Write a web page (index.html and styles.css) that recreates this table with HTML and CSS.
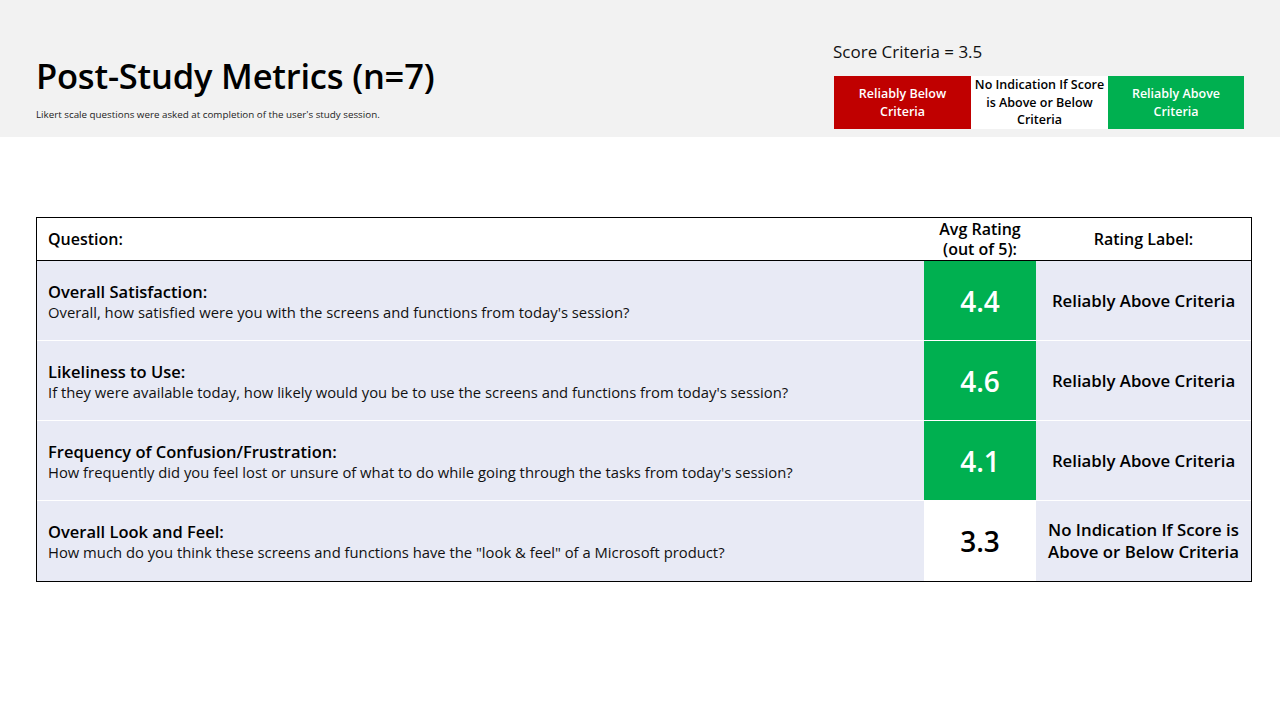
FILE: index.html
```html
<!DOCTYPE html>
<html>
<head>
<meta charset="utf-8">
<link rel="stylesheet" href="styles.css">
</head>
<body>
<header class="top">
  <div class="titles">
    <h1 class="title">Post-Study Metrics (n=7)</h1>
    <p class="subtitle">Likert scale questions were asked at completion of the user's study session.</p>
  </div>
  <div class="criteria">
    <div class="criteria-label">Score Criteria = 3.5</div>
    <div class="legend">
      <div class="legend-box red">Reliably Below Criteria</div>
      <div class="legend-box white">No Indication If Score is Above or Below Criteria</div>
      <div class="legend-box green">Reliably Above Criteria</div>
    </div>
  </div>
</header>
<main class="content">
  <div class="table">
    <div class="head q">Question:</div>
    <div class="head c">Avg Rating<br>(out of 5):</div>
    <div class="head c">Rating Label:</div>

    <div class="cell q"><b>Overall Satisfaction:</b><span>Overall, how satisfied were you with the screens and functions from today's session?</span></div>
    <div class="cell score good">4.4</div>
    <div class="cell label">Reliably Above Criteria</div>

    <div class="cell q"><b>Likeliness to Use:</b><span>If they were available today, how likely would you be to use the screens and functions from today's session?</span></div>
    <div class="cell score good">4.6</div>
    <div class="cell label">Reliably Above Criteria</div>

    <div class="cell q"><b>Frequency of Confusion/Frustration:</b><span>How frequently did you feel lost or unsure of what to do while going through the tasks from today's session?</span></div>
    <div class="cell score good">4.1</div>
    <div class="cell label">Reliably Above Criteria</div>

    <div class="cell q last"><b>Overall Look and Feel:</b><span>How much do you think these screens and functions have the "look &amp; feel" of a Microsoft product?</span></div>
    <div class="cell score neutral last">3.3</div>
    <div class="cell label last">No Indication If Score is Above or Below Criteria</div>
  </div>
</main>
</body>
</html>
```
FILE: styles.css
```css
* { box-sizing: border-box; }
html, body { margin: 0; padding: 0; }
body {
  width: 1280px;
  height: 720px;
  background: #ffffff;
  font-family: "Open Sans", "Noto Sans", sans-serif;
  color: #000;
  overflow: hidden;
}
.top {
  height: 137px;
  background: #f2f2f2;
  display: flex;
  justify-content: space-between;
  padding: 0 36px 0 36px;
}
.titles {
  padding-top: 52px;
}
.title {
  margin: 0;
  font-size: 34.5px;
  font-weight: 600;
  line-height: 48px;
  letter-spacing: -0.2px;
}
.subtitle {
  margin: 8px 0 0 0;
  font-size: 9.8px;
  line-height: 14px;
  color: #222;
}
.criteria {
  padding-top: 41px;
  width: 410px;
}
.criteria-label {
  font-size: 17px;
  line-height: 22px;
  color: #111;
  margin-left: -1px;
}
.legend {
  display: flex;
  margin-top: 13px;
}
.legend-box {
  width: 137px;
  height: 53px;
  display: flex;
  align-items: center;
  justify-content: center;
  text-align: center;
  font-size: 12.5px;
  font-weight: 600;
  line-height: 17.5px;
  padding: 0 10px;
}
.legend-box.red { background: #c00000; color: #fff; }
.legend-box.white { background: #fff; color: #000; padding: 0; }
.legend-box.green { background: #00b050; color: #fff; width: 136px; }

.content {
  padding: 80px 28px 0 36px;
}
.table {
  display: grid;
  grid-template-columns: 887px 112px 1fr;
  grid-template-rows: 43px 80px 80px 80px 80px;
  border: 1.5px solid #000;
  width: 1216px;
}
.head {
  background: #fff;
  border-bottom: 1.5px solid #000;
  display: flex;
  align-items: center;
  font-size: 16px;
  font-weight: 600;
  line-height: 20px;
}
.head.q { padding-left: 11px; }
.head.c { justify-content: center; text-align: center; }
.cell {
  background: #e8eaf5;
  border-bottom: 1px solid #ffffff;
  display: flex;
  align-items: center;
}
.cell.last { border-bottom: none; }
.cell.q {
  flex-direction: column;
  align-items: flex-start;
  justify-content: center;
  padding-left: 11px;
  padding-top: 2px;
}
.cell.q b {
  font-size: 16.5px;
  font-weight: 600;
  line-height: 21px;
}
.cell.q span {
  font-size: 14.8px;
  line-height: 21px;
  color: #111;
}
.cell.score {
  justify-content: center;
  font-size: 28px;
  font-weight: 600;
}
.cell.score.good { background: #00b050; color: #fff; }
.cell.score.neutral { background: #fff; color: #000; }
.cell.label {
  justify-content: center;
  text-align: center;
  font-size: 16.8px;
  font-weight: 600;
  line-height: 22px;
  padding: 0 6px;
}
```
